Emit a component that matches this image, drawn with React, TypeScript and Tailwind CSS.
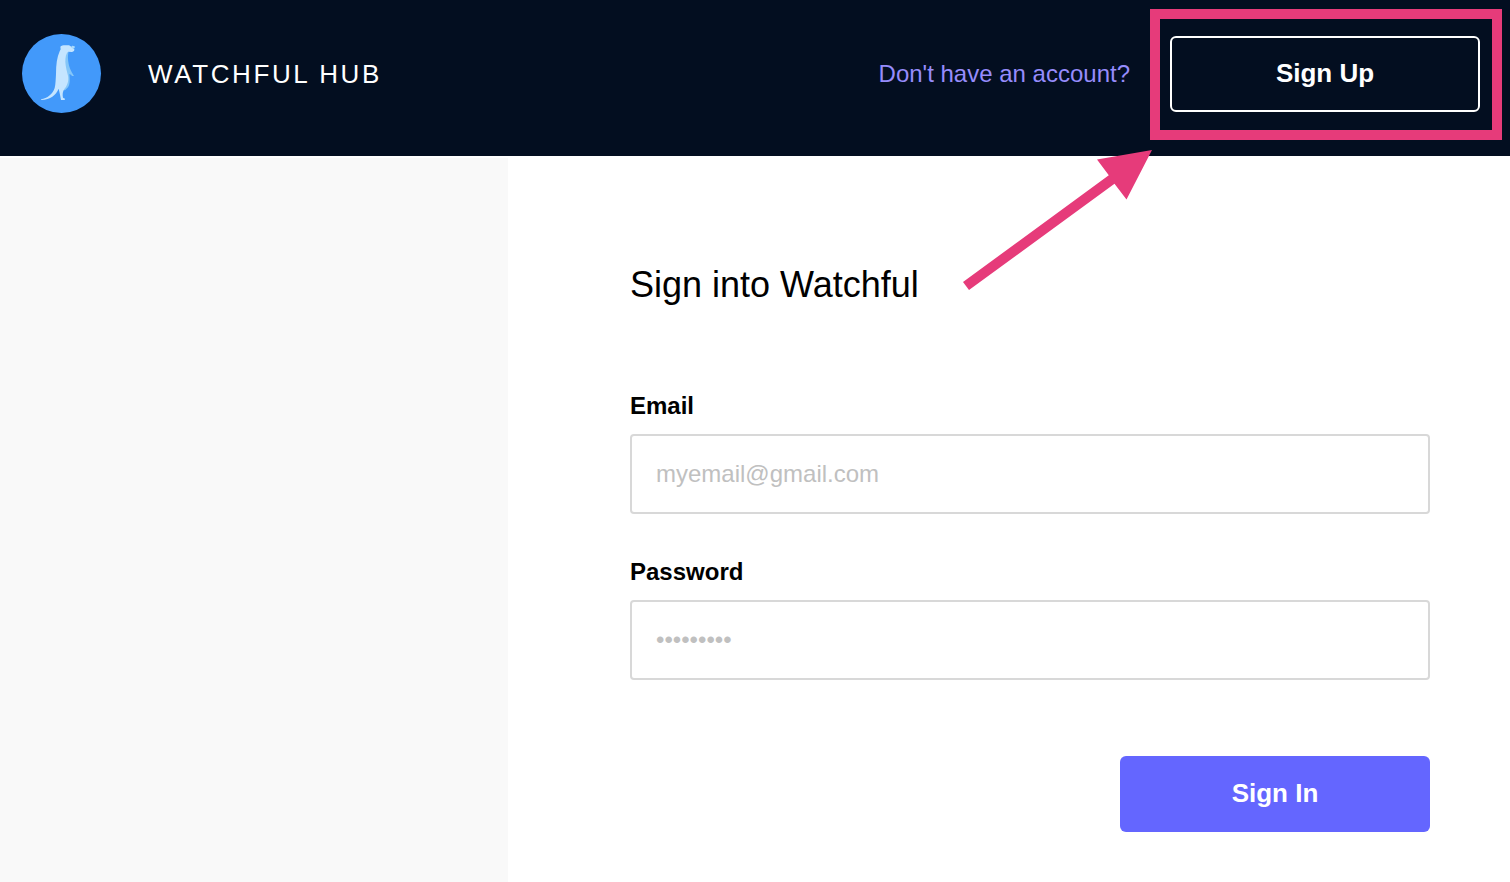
import type { InputHTMLAttributes } from "react";

function Logo() {
  return (
    <svg className="size-20 shrink-0" viewBox="36 30 240 240" aria-hidden="true">
      <circle cx="154.500" cy="148.500" r="118.500" fill="#4299fa" />
      {/* shaded back and arm */}
      <path
        d="M162 82 L176 82 C173 94 173 106 176 120 C178 130 182 139 186 146 L192 156 L186 156 L183 152 L178 150 C180 168 180 182 174 190 L165 199 L158 198 Z"
        fill="#84c6f8"
      />
      {/* body and tail */}
      <path
        d="M151 68 C155 64 163 63 171 64 C177 63 181 65 184 69 L193 76 C194 79 192 83 186 84 L174 83 C168 88 166 100 166 114 C167 130 171 142 174 155 C177 170 172 184 163 195 C158 202 157 212 159 221 L165 224 L164 228 L153 228 C151 216 149 206 146 194 C138 214 121 226 94 228 L93 226 C112 223 128 210 134 192 C137 180 137 167 138 150 C138 122 141 100 149 82 L152 76 Z"
        fill="#c5e5ff"
      />
      <path d="M184 67 L187 65 L194 67 L194 72 L190 74 L186 72 Z" fill="#a9dafc" />
    </svg>
  );
}

// Pink frame and arrow pointing at the button they sit in
function Callout() {
  return (
    <>
      <div className="pointer-events-none absolute -top-[27px] -right-[22px] -bottom-7 -left-5 border-10 border-[#e63b7a]" />
      <svg
        className="pointer-events-none absolute top-[114px] right-full mr-[18px] h-[140px] w-[190px]"
        viewBox="0 0 190 140"
        aria-hidden="true"
      >
        <path
          d="M190 0 L164.500 49.500 L152.500 33.700 L7 140 L1 132 L146.800 25.300 L135 9.500 Z"
          fill="#e63b7a"
        />
      </svg>
    </>
  );
}

type FieldProps = InputHTMLAttributes<HTMLInputElement> & { id: string; label: string };

function Field({ id, label, ...rest }: FieldProps) {
  return (
    <div className="flex flex-col gap-3">
      <label htmlFor={id} className="text-2xl font-bold">
        {label}
      </label>
      <input
        id={id}
        className="h-20 w-full rounded border-2 border-[#d8d8d8] bg-white px-6 text-2xl placeholder:text-[#c0c0c0]"
        {...rest}
      />
    </div>
  );
}

export default function App() {
  return (
    <div className="flex min-h-screen flex-col bg-white font-['Liberation_Sans',Arial,sans-serif] text-black">
      <header className="flex items-center justify-between bg-[#030e20] pt-[34px] pr-[30px] pb-[42px] pl-[22px]">
        <div className="flex items-center gap-[46px]">
          <Logo />
          <span className="text-[26px] tracking-widest text-white">WATCHFUL HUB</span>
        </div>
        <div className="flex items-center gap-10">
          <span className="text-2xl text-[#968cfc]">Don't have an account?</span>
          <div className="relative">
            <button
              type="button"
              className="h-19 w-[310px] rounded-md border-2 border-white pb-0.5 text-[26px] font-bold text-white"
            >
              Sign Up
            </button>
            <Callout />
          </div>
        </div>
      </header>

      <div className="mt-0.5 flex grow">
        <aside className="w-[508px] shrink-0 bg-[#f9f9f9]" />
        <main className="grow pt-[107px] pr-20 pb-[50px] pl-[122px]">
          <h1 className="text-4xl">Sign into Watchful</h1>
          <form className="mt-[85px] flex flex-col gap-[42px]">
            <Field id="email" label="Email" type="email" placeholder="myemail@gmail.com" />
            <Field id="password" label="Password" type="password" placeholder="•••••••••" />
            <button
              type="submit"
              className="mt-[34px] h-19 w-[310px] self-end rounded-md bg-[#6466ff] pb-0.5 text-[26px] font-bold text-white"
            >
              Sign In
            </button>
          </form>
        </main>
      </div>
    </div>
  );
}
